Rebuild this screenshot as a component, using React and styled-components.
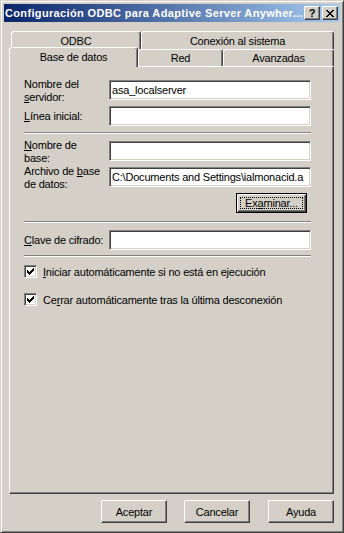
import React from 'react';
import styled, { createGlobalStyle } from 'styled-components';

const GlobalStyle = createGlobalStyle`
  html, body {
    margin: 0;
    padding: 0;
    background: #d4d0c8;
  }
  body {
    font-family: "Liberation Sans", Arial, sans-serif;
    font-size: 11px;
    letter-spacing: -0.2px;
    color: #000;
  }
  * {
    box-sizing: border-box;
  }
`;

const Window = styled.div`
  width: 344px;
  height: 533px;
  display: flex;
  flex-direction: column;
  background: #d4d0c8;
  border: 1px solid;
  border-color: #d4d0c8 #404040 #404040 #d4d0c8;
  box-shadow: inset 1px 1px #fff, inset -1px -1px #808080;
  padding: 3px;
`;

const TitleBar = styled.div`
  height: 18px;
  display: flex;
  align-items: center;
  padding: 0 2px 0 1px;
  background: linear-gradient(to right, #0a246a, #a6caf0);
`;

const Title = styled.div`
  flex: 1;
  color: #fff;
  font-weight: bold;
  letter-spacing: 0.35px;
  white-space: nowrap;
  overflow: hidden;
  line-height: 18px;
`;

const CaptionButton = styled.div`
  width: 16px;
  height: 14px;
  margin-left: ${p => p.$gap || 0}px;
  display: flex;
  align-items: center;
  justify-content: center;
  background: #d4d0c8;
  border: 1px solid;
  border-color: #fff #404040 #404040 #fff;
  box-shadow: inset -1px -1px #808080;
  font-weight: bold;
  font-size: 11px;
  letter-spacing: 0;
  line-height: 12px;
`;

const Body = styled.div`
  flex: 1;
  display: flex;
  flex-direction: column;
  padding: 9px 6px 6px 5px;
`;

const TabRow = styled.div`
  height: ${p => p.$h}px;
  display: flex;
  align-items: flex-end;
  padding-left: ${p => p.$indent || 0}px;
`;

const Tab = styled.div`
  position: relative;
  width: ${p => p.$w}px;
  height: ${p => (p.$active ? 20 : p.$h)}px;
  margin-bottom: ${p => (p.$active ? -1 : 0)}px;
  z-index: ${p => (p.$active ? 2 : 1)};
  display: flex;
  align-items: center;
  justify-content: center;
  padding-bottom: ${p => (p.$active ? 2 : 0)}px;
  background: #d4d0c8;
  border: 1px solid;
  border-bottom: none;
  border-color: #fff #404040 transparent #fff;
  border-radius: 3px 3px 0 0;
  box-shadow: inset -1px 0 #808080;
  white-space: nowrap;
`;

const Panel = styled.div`
  flex: 1;
  display: flex;
  flex-direction: column;
  padding: 13px 22px 0 14px;
  border: 1px solid;
  border-color: #fff #404040 #404040 #fff;
  box-shadow: inset -1px -1px #808080;
`;

const Field = styled.div`
  display: flex;
  align-items: ${p => (p.$top ? 'flex-start' : 'center')};
  height: ${p => p.$h || 20}px;
  margin-top: ${p => p.$mt || 0}px;
`;

const Label = styled.div`
  width: 85px;
  flex: none;
  line-height: 13px;
  white-space: nowrap;
  margin-top: ${p => (p.$top ? -2 : 0)}px;
`;

const TextBox = styled.input`
  width: 202px;
  height: 20px;
  margin: 0;
  padding: 0 2px;
  font: inherit;
  letter-spacing: inherit;
  color: #000;
  background: #fff;
  border: 1px solid;
  border-color: #808080 #fff #fff #808080;
  box-shadow: inset 1px 1px #404040, inset -1px -1px #d4d0c8;
  outline: none;
`;

const U = styled.span`
  text-decoration: underline;
  text-underline-offset: 1px;
`;

const Separator = styled.div`
  height: 2px;
  width: 287px;
  margin-top: ${p => p.$mt}px;
  border-top: 1px solid #808080;
  border-bottom: 1px solid #fff;
`;

const ButtonRow = styled.div`
  display: flex;
  justify-content: flex-end;
  padding-right: 4px;
`;

const Button = styled.div`
  width: ${p => p.$w}px;
  height: ${p => p.$h}px;
  margin-left: ${p => p.$gap || 0}px;
  display: flex;
  align-items: center;
  justify-content: center;
  background: #d4d0c8;
  border: 1px solid;
  border-color: ${p => (p.$default ? '#000' : '#fff #404040 #404040 #fff')};
  box-shadow: ${p =>
    p.$default
      ? 'inset 1px 1px #fff, inset -1px -1px #404040, inset -2px -2px #808080'
      : 'inset -1px -1px #808080'};
  white-space: nowrap;
`;

const FocusRing = styled.div`
  flex: 1;
  align-self: stretch;
  margin: 3px;
  display: flex;
  align-items: center;
  justify-content: center;
  border: 1px dotted #000;
`;

const CheckRow = styled.div`
  display: flex;
  align-items: center;
  gap: 6px;
  height: 13px;
  margin-top: ${p => p.$mt}px;
  white-space: nowrap;
`;

const CheckBox = styled.div`
  width: 13px;
  height: 13px;
  flex: none;
  display: flex;
  align-items: center;
  justify-content: center;
  background: #fff;
  border: 1px solid;
  border-color: #808080 #fff #fff #808080;
  box-shadow: inset 1px 1px #404040, inset -1px -1px #d4d0c8;
`;

const Footer = styled.div`
  display: flex;
  justify-content: flex-end;
  margin-top: 6px;
`;

// classic pixel glyphs
const checkPixels = [
  '......X',
  '.....XX',
  'X...XXX',
  'XX.XXX.',
  'XXXXX..',
  '.XXX...',
  '..X....',
];

const closePixels = [
  'XX....XX',
  '.XX..XX.',
  '..XXXX..',
  '...XX...',
  '..XXXX..',
  '.XX..XX.',
  'XX....XX',
];

const PixelIcon = ({ rows }) => (
  <svg width={rows[0].length} height={rows.length} shapeRendering="crispEdges">
    {rows.map((row, y) =>
      row.split('').map((c, x) =>
        c === 'X' ? <rect key={x + '-' + y} x={x} y={y} width="1" height="1" fill="#000" /> : null
      )
    )}
  </svg>
);

const Check = ({ mt, children }) => (
  <CheckRow $mt={mt}>
    <CheckBox>
      <PixelIcon rows={checkPixels} />
    </CheckBox>
    <span>{children}</span>
  </CheckRow>
);

export default function App() {
  return (
    <>
      <GlobalStyle />
      <Window>
        <TitleBar>
          <Title>Configuración ODBC para Adaptive Server Anywher...</Title>
          <CaptionButton>?</CaptionButton>
          <CaptionButton $gap={2}>
            <PixelIcon rows={closePixels} />
          </CaptionButton>
        </TitleBar>
        <Body>
          <TabRow $h={18} $indent={2}>
            <Tab $w={130} $h={18}>ODBC</Tab>
            <Tab $w={193} $h={18}>Conexión al sistema</Tab>
          </TabRow>
          <TabRow $h={17}>
            <Tab $w={129} $h={17} $active>Base de datos</Tab>
            <Tab $w={85} $h={17}>Red</Tab>
            <Tab $w={111} $h={17}>Avanzadas</Tab>
          </TabRow>
          <Panel>
            <Field $h={26} $top>
              <Label $top>
                Nombre del
                <br />
                <U>s</U>ervidor:
              </Label>
              <TextBox readOnly defaultValue="asa_localserver" />
            </Field>
            <Field>
              <Label>
                <U>L</U>ínea inicial:
              </Label>
              <TextBox readOnly defaultValue="" />
            </Field>
            <Separator $mt={6} />
            <Field $h={26} $top $mt={7}>
              <Label $top>
                <U>N</U>ombre de
                <br />
                base:
              </Label>
              <TextBox readOnly defaultValue="" />
            </Field>
            <Field $h={26} $top>
              <Label $top>
                Archivo de <U>b</U>ase
                <br />
                de datos:
              </Label>
              <TextBox readOnly defaultValue="C:\Documents and Settings\ialmonacid.a" />
            </Field>
            <ButtonRow>
              <Button $w={71} $h={20} $default>
                <FocusRing>
                  Ex<U>a</U>minar...
                </FocusRing>
              </Button>
            </ButtonRow>
            <Separator $mt={8} />
            <Field $mt={7}>
              <Label>
                <U>C</U>lave de cifrado:
              </Label>
              <TextBox readOnly defaultValue="" />
            </Field>
            <Separator $mt={5} />
            <Check mt={8}>
              <U>I</U>niciar automáticamente si no está en ejecución
            </Check>
            <Check mt={15}>
              Ce<U>r</U>rar automáticamente tras la última desconexión
            </Check>
          </Panel>
          <Footer>
            <Button $w={66} $h={23}>Aceptar</Button>
            <Button $w={66} $h={23} $gap={17}>Cancelar</Button>
            <Button $w={66} $h={23} $gap={18}>Ayuda</Button>
          </Footer>
        </Body>
      </Window>
    </>
  );
}
